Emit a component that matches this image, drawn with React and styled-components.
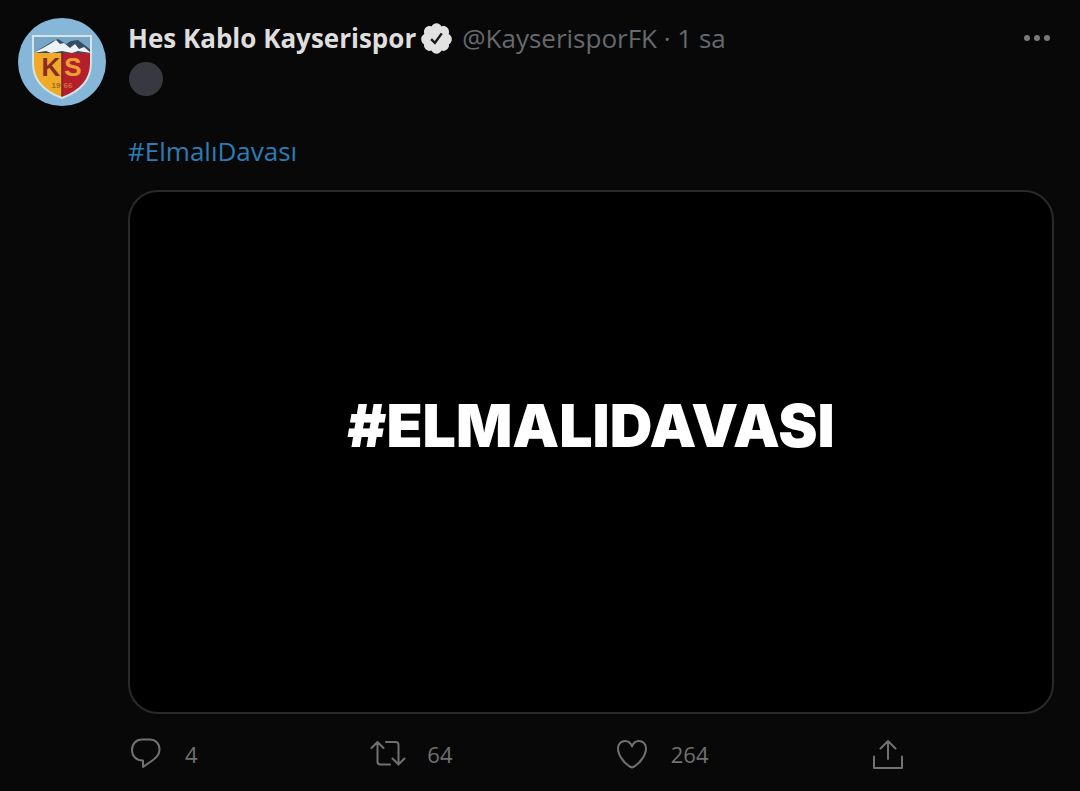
import React from "react";
import styled, { createGlobalStyle } from "styled-components";

const actions = [
  { name: "reply", label: "Yanıtla", count: 4 },
  { name: "retweet", label: "Retweetle", count: 64 },
  { name: "like", label: "Beğen", count: 264 },
  { name: "share", label: "Paylaş" },
];

function ActionIcon({ name }) {
  return (
    <IconSvg viewBox="0 0 36 36" aria-hidden="true">
      {name === "reply" && (
        <path d="M14 3.500H21.500c6 0 10 4 10 10C31.500 18.500 28.500 21.500 25 24L15 31V24.500C8 24.500 4 20 4 14 4 8 8 3.500 14 3.500Z" />
      )}
      {name === "retweet" && (
        <path d="M1.500 12 7.500 6l6 6M7.500 6.500v19q0 3 3 3H20M16 6h9.500q3 0 3 3V28M22.500 22.500l6 6 6-6" />
      )}
      {name === "like" && (
        <path d="M18 31.500C14 30.500 4 21.500 4 12.500 4 8 7.300 5 11 5c3.500 0 6 2.500 7 5.500C19 7.500 21.500 5 25 5c3.700 0 7 3 7 7.500 0 9-10 18-14 19Z" />
      )}
      {name === "share" && (
        <path d="M18 23V5M10.500 12.500 18 5l7.500 7.500M4 20.500V32h28V20.500" />
      )}
    </IconSvg>
  );
}

function VerifiedBadge() {
  return (
    <BadgeSvg viewBox="0 0 24 24" role="img" aria-label="Onaylanmış hesap">
      <path
        fill="#e2e2e2"
        d="M22.5 12.5c0-1.58-.875-2.95-2.148-3.6.154-.435.238-.905.238-1.4 0-2.21-1.71-3.998-3.818-3.998-.47 0-.92.084-1.336.25C14.818 2.415 13.51 1.5 12 1.5s-2.816.917-3.437 2.25c-.415-.165-.866-.25-1.336-.25-2.11 0-3.818 1.79-3.818 4 0 .494.083.964.237 1.4-1.272.65-2.147 2.018-2.147 3.6 0 1.495.782 2.798 1.942 3.486-.02.17-.032.34-.032.514 0 2.21 1.708 4 3.818 4 .47 0 .92-.086 1.335-.25.62 1.334 1.926 2.25 3.437 2.25 1.512 0 2.818-.916 3.437-2.25.415.163.865.248 1.336.248 2.11 0 3.818-1.79 3.818-4 0-.174-.012-.344-.033-.513 1.158-.687 1.943-1.99 1.943-3.484z"
      />
      <path
        d="M8.300 12.500l2.600 2.500 4.700-6.500"
        fill="none"
        stroke="#1b1b1b"
        strokeWidth="1.700"
      />
    </BadgeSvg>
  );
}

function ClubLogo() {
  return (
    <svg viewBox="0 0 88 88" width="100%" role="img" aria-label="Kayserispor">
      <defs>
        <clipPath id="shield">
          <path d="M15 18H73V45C73 61 63 73 44 80 25 73 15 61 15 45Z" />
        </clipPath>
      </defs>
      <circle cx="44" cy="44" r="44" fill="#86b7d9" />
      <g clipPath="url(#shield)">
        <path d="M15 18H73V40H15Z" fill="#78a5c5" />
        <path d="M15 34H44V80H15Z" fill="#efaa27" />
        <path d="M44 34H73V80H44Z" fill="#b51f2b" />
        <path d="M15 35 27 28 35 23 40 21 48 26 53 23 60 22 73 32V35Z" fill="#354c62" />
        <path
          d="M15 35 25 30 32 26 38 22 42 26 46 25 52 30 57 26 61 31 66 29 73 35 60 33 54 35 44 33 33 35 28 33Z"
          fill="#edf2f5"
        />
        <path d="M44 34V80" stroke="#73232a" strokeWidth="1.500" />
      </g>
      <path
        d="M15 18H73V45C73 61 63 73 44 80 25 73 15 61 15 45Z"
        fill="none"
        stroke="#d5e4e5"
        strokeWidth="2"
      />
      <LogoText x="33" y="58" $size={26} fill="#8b2b29">K</LogoText>
      <LogoText x="55" y="58" $size={26} fill="#e9a232">S</LogoText>
      <LogoText x="38" y="70" $size={8} fill="#a36526">19</LogoText>
      <LogoText x="50" y="70" $size={8} fill="#d56b34">66</LogoText>
    </svg>
  );
}

function App() {
  return (
    <>
      <GlobalStyle />
      <Tweet>
        <Avatar href="#profile">
          <ClubLogo />
        </Avatar>
        <Content>
          <Header>
            <DisplayName href="#profile">Hes Kablo Kayserispor</DisplayName>
            <VerifiedBadge />
            <Meta>@KayserisporFK · 1 sa</Meta>
            <MoreButton aria-label="Daha fazla">
              <MoreSvg viewBox="0 0 28 8" aria-hidden="true">
                <circle cx="4" cy="4" r="3" />
                <circle cx="14" cy="4" r="3" />
                <circle cx="24" cy="4" r="3" />
              </MoreSvg>
            </MoreButton>
          </Header>
          <BlackCircle />
          <Hashtag href="#ElmaliDavasi">#ElmalıDavası</Hashtag>
          <Media>#ELMALIDAVASI</Media>
          <Actions>
            {actions.map(({ name, label, count }) => (
              <ActionButton key={name} aria-label={label}>
                <ActionIcon name={name} />
                {count && <Count>{count}</Count>}
              </ActionButton>
            ))}
          </Actions>
        </Content>
      </Tweet>
    </>
  );
}

const GlobalStyle = createGlobalStyle`
  * {
    box-sizing: border-box;
  }
  body {
    margin: 0;
    background-color: #080808;
    font-family: "Open Sans", "Noto Sans", sans-serif;
  }
  a {
    text-decoration: none;
  }
  button {
    padding: 0;
    border: none;
    background: none;
    font-family: inherit;
    cursor: pointer;
  }
`;

const Tweet = styled.article`
  display: flex;
  gap: 22px;
  padding: 18px 26px 18px 18px;
`;

const Avatar = styled.a`
  flex: none;
  width: 88px;
  height: 88px;
`;

const LogoText = styled.text`
  font-family: "Liberation Sans", sans-serif;
  font-size: ${(props) => props.$size}px;
  font-weight: bold;
  text-anchor: middle;
`;

const Content = styled.div`
  display: flex;
  flex: 1;
  flex-direction: column;
  align-items: flex-start;
  min-width: 0;
`;

const Header = styled.header`
  display: flex;
  align-items: center;
  width: 100%;
  height: 40px;
  font-size: 26px;
  line-height: 40px;
  white-space: nowrap;
`;

const DisplayName = styled.a`
  color: #dedede;
  font-weight: 700;
`;

const BadgeSvg = styled.svg`
  flex: none;
  width: 35px;
  height: 35px;
  margin: 0 8px 0 3px;
`;

const Meta = styled.span`
  color: #66696d;
`;

const MoreButton = styled.button`
  display: flex;
  margin-left: auto;
  padding: 8px 3px;
`;

const MoreSvg = styled.svg`
  width: 28px;
  height: 8px;
  fill: #77797c;
`;

const BlackCircle = styled.span`
  width: 34px;
  height: 34px;
  margin: 4px 0 35px 1px;
  border-radius: 50%;
  background-color: #383940;
`;

const Hashtag = styled.a`
  color: #2c7db5;
  font-size: 26px;
  line-height: 40px;
`;

const Media = styled.div`
  display: flex;
  align-items: center;
  justify-content: center;
  width: 100%;
  aspect-ratio: 926 / 524;
  margin-top: 19px;
  padding-bottom: 54px;
  border: 2px solid #2a2a2a;
  border-radius: 30px;
  background-color: #000;
  color: #fff;
  font-family: Inter, "Open Sans", sans-serif;
  font-size: 59px;
  font-weight: 900;
`;

const Actions = styled.div`
  display: flex;
  justify-content: space-between;
  width: 84%;
  margin-top: 22px;
`;

const ActionButton = styled.button`
  display: flex;
  align-items: center;
  gap: 21px;
  height: 36px;
  color: #707173;
  font-size: 22px;
`;

const Count = styled.span`
  min-width: 24px;
  text-align: left;
`;

const IconSvg = styled.svg`
  width: 36px;
  height: 36px;
  fill: none;
  stroke: #707173;
  stroke-width: 2;
  stroke-linecap: round;
  stroke-linejoin: round;
`;

export default App;
